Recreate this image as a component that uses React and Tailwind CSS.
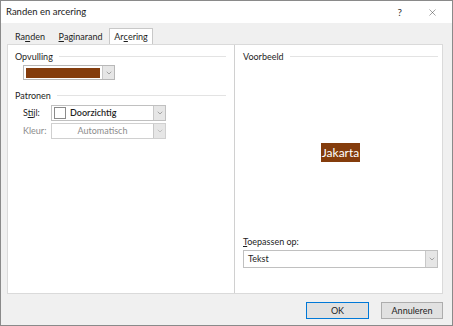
import { ChevronDown, X } from "lucide-react";

const font = { fontFamily: 'Lato, "Noto Sans", sans-serif' };

const DropArrow = ({ disabled }) => (
  <div className="w-[12px] self-stretch flex items-center justify-center bg-[#e6e6e6] border-l border-[#c8c8c8]">
    <ChevronDown size={8} strokeWidth={1.5} className={disabled ? "text-[#9a9a9a]" : "text-[#606060]"} />
  </div>
);

const GroupTitle = ({ children }) => (
  <div className="flex items-center gap-[6px] h-[12px]">
    <span className="text-[9px] text-[#1e1e1e] leading-none">{children}</span>
    <div className="flex-1 h-px bg-[#e3e3e3]" />
  </div>
);

export default function App() {
  return (
    <div
      className="w-[453px] h-[326px] border border-[#8a8a8a] bg-[#f0f0f0] flex flex-col overflow-hidden"
      style={font}
    >
      {/* title bar */}
      <div className="h-[22px] bg-white flex items-center pl-[5px] pr-[14px]">
        <span className="text-[9.5px] text-[#1a1a1a]">Randen en arcering</span>
        <div className="ml-auto flex items-center gap-[25px] text-[#333]">
          <span className="text-[10px]">?</span>
          <X size={11} strokeWidth={1} />
        </div>
      </div>

      <div className="flex-1 flex flex-col pl-[6px] pr-[9px]">
        {/* tabs */}
        <div className="flex items-end h-[21px] pl-[1px] gap-[3px]">
          <div className="w-[44px] h-[15px] flex items-center justify-center text-[9px] text-[#1e1e1e]">
            Ra<u>n</u>den
          </div>
          <div className="w-[51px] h-[15px] flex items-center justify-center text-[9px] text-[#1e1e1e]">
            <u>P</u>aginarand
          </div>
          <div className="w-[44px] h-[16px] flex items-center justify-center text-[9px] text-[#1e1e1e] bg-white border border-[#c8c8c8] border-b-0">
            Ar<u>c</u>ering
          </div>
        </div>

        {/* panel */}
        <div className="h-[250px] bg-white border border-[#dadada] flex">
          <div className="w-[227px] pl-[7px] pr-[8px] pt-[5px] border-r border-[#d0d0d0]">
            <GroupTitle>Opvulling</GroupTitle>
            <div className="ml-[8px] mt-[3px] w-[92px] h-[15px] border border-[#b8b8b8] flex">
              <div className="flex-1 flex items-center px-[2px]">
                <div className="w-full h-[10px] bg-[#843c0c]" />
              </div>
              <DropArrow />
            </div>

            <div className="mt-[9px]">
              <GroupTitle>Patronen</GroupTitle>
            </div>
            <div className="mt-[4px] ml-[8px] flex items-center">
              <span className="w-[28px] text-[9px] text-[#1e1e1e]">
                S<u>t</u>ijl:
              </span>
              <div className="w-[115px] h-[16px] border border-[#c0c0c0] flex">
                <div className="flex-1 flex items-center pl-[2px] gap-[4px]">
                  <div className="w-[12px] h-[12px] border border-[#8a8a8a] bg-white" />
                  <span className="text-[9px] text-[#1e1e1e] font-semibold">Doorzichtig</span>
                </div>
                <DropArrow />
              </div>
            </div>
            <div className="mt-[2px] ml-[8px] flex items-center">
              <span className="w-[28px] text-[9px] text-[#8c8c8c]">Kleur:</span>
              <div className="w-[115px] h-[16px] border border-[#d0d0d0] flex">
                <div className="flex-1 flex items-center justify-center">
                  <span className="text-[9px] text-[#8c8c8c]">Automatisch</span>
                </div>
                <DropArrow disabled />
              </div>
            </div>
          </div>

          <div className="flex-1 flex flex-col pl-[8px] pr-[4px] pt-[5px] pb-[25px]">
            <GroupTitle>Voorbeeld</GroupTitle>
            <div className="flex-1 flex items-center justify-center">
              <span className="bg-[#843c0c] text-white text-[12px] leading-[19px] px-[1px] mt-[6px]">
                Jakarta
              </span>
            </div>
            <span className="text-[9px] text-[#1e1e1e] leading-none">
              <u>T</u>oepassen op:
            </span>
            <div className="mt-[4px] h-[18px] border border-[#c0c0c0] flex">
              <div className="flex-1 flex items-center pl-[4px]">
                <span className="text-[9px] text-[#1e1e1e]">Tekst</span>
              </div>
              <DropArrow />
            </div>
          </div>
        </div>

        {/* buttons */}
        <div className="flex-1 flex items-center justify-end gap-[12px] pt-[2px]">
          <button className="w-[63px] h-[17px] bg-[#e1e1e1] border border-[#0078d7] text-[9px] text-[#1e1e1e]">
            OK
          </button>
          <button className="w-[62px] h-[17px] bg-[#e1e1e1] border border-[#adadad] text-[9px] text-[#1e1e1e]">
            Annuleren
          </button>
        </div>
      </div>
    </div>
  );
}
